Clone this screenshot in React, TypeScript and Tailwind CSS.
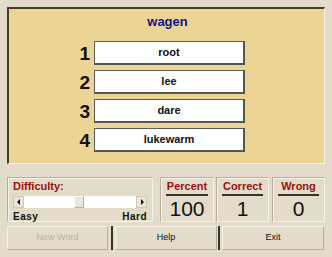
import React from "react";

const words = ["root", "lee", "dare", "lukewarm"];

function Stat({ label, value, className }: { label: string; value: string; className?: string }) {
  return (
    <div className={"flex flex-col items-stretch h-[45px] border border-t-[#b7ae9c] border-l-[#b7ae9c] border-b-[#f7f3ea] border-r-[#f7f3ea] shadow-[inset_1px_1px_0_#f7f3ea] px-[5px] " + (className || "")}>
      <div className="text-[11px] font-bold text-[#9a1010] text-center leading-[13px] pt-[2px] pb-[1px] border-b-[2px] border-[#3a332a]">{label}</div>
      <div className="flex-1 flex items-center justify-center text-[21px] text-[#111] leading-none pb-[1px]">{value}</div>
    </div>
  );
}

export default function App() {
  return (
    <div className="w-[332px] h-[257px] bg-[#e4dccb] overflow-hidden relative" style={{ fontFamily: '"Liberation Sans", Arial, sans-serif' }}>
      <div className="pt-[7px] px-[7px]">
        <div className="h-[157px] bg-[#ecd594] border-t-[2px] border-l-[2px] border-t-[#463c2c] border-l-[#463c2c] border-r border-b border-r-[#fbf6ea] border-b-[#fbf6ea] flex flex-col">
          <div className="text-[13px] font-bold text-[#14128a] mt-[5px] leading-[16px] text-center pl-[2px]">wagen</div>
          <div className="flex flex-col gap-[5px] mt-[11px] pl-[67px]">
            {words.map((w, i) => (
              <div key={w} className="flex items-center">
                <div className="w-[14px] text-right text-[19px] font-bold text-[#111] mr-[4px] leading-none">{i + 1}</div>
                <div className="w-[151px] h-[24px] bg-white border border-[#5a5a5a] border-r-[2px] border-b-[2px] border-r-[#555] border-b-[#555] flex items-center justify-center text-[11px] font-bold text-[#111]">
                  {w}
                </div>
              </div>
            ))}
          </div>
        </div>
      </div>
      <div className="flex px-[7px] mt-[13px] gap-[7px]">
        <div className="w-[146px] h-[45px] border border-t-[#b7ae9c] border-l-[#b7ae9c] border-b-[#f7f3ea] border-r-[#f7f3ea] shadow-[inset_1px_1px_0_#f7f3ea] px-[5px] pt-[2px]">
          <div className="text-[11px] font-bold text-[#9a1010] leading-[13px]">Difficulty:</div>
          <div className="flex h-[12px] mt-[3px] items-stretch">
            <div className="w-[11px] bg-[#ece6d8] border border-[#cfc7b6] flex items-center justify-center">
              <svg width="4" height="6" viewBox="0 0 4 6"><path d="M3 0 L0 3 L3 6 Z" fill="#111" /></svg>
            </div>
            <div className="flex-1 bg-white relative">
              <div className="absolute left-[50px] top-0 w-[10px] h-full bg-[#ece6d8] border border-t-white border-l-white border-r-[#b8b0a0] border-b-[#b8b0a0]" />
            </div>
            <div className="w-[11px] bg-[#ece6d8] border border-[#cfc7b6] flex items-center justify-center">
              <svg width="4" height="6" viewBox="0 0 4 6"><path d="M1 0 L4 3 L1 6 Z" fill="#111" /></svg>
            </div>
          </div>
          <div className="flex justify-between text-[10px] font-bold text-[#111] leading-[12px] mt-[3px] tracking-[0.5px]">
            <span>Easy</span>
            <span>Hard</span>
          </div>
        </div>
        <Stat label="Percent" value="100" className="w-[54px]" />
        <Stat label="Correct" value="1" className="w-[53px] -ml-[5px]" />
        <Stat label="Wrong" value="0" className="w-[53px] -ml-[4px]" />
      </div>
      <div className="flex px-[7px] mt-[4px] h-[24px]">
        <div className="w-[101px] border border-t-[#f7f3ea] border-l-[#f7f3ea] border-b-[#b7ae9c] border-r-[#b7ae9c] flex items-center justify-center text-[9px] text-[#b8b0a0]">New Word</div>
        <div className="ml-[3px] w-[2px] bg-[#3a332a]" />
        <div className="ml-[2px] w-[102px] border border-t-[#f7f3ea] border-l-[#f7f3ea] border-b-[#b7ae9c] border-r-[#b7ae9c] flex items-center justify-center text-[9px] text-[#111]">Help</div>
        <div className="ml-[1px] w-[2px] bg-[#3a332a]" />
        <div className="ml-[2px] w-[102px] border border-t-[#f7f3ea] border-l-[#f7f3ea] border-b-[#b7ae9c] border-r-[#b7ae9c] flex items-center justify-center text-[9px] text-[#111]">Exit</div>
      </div>
    </div>
  );
}
